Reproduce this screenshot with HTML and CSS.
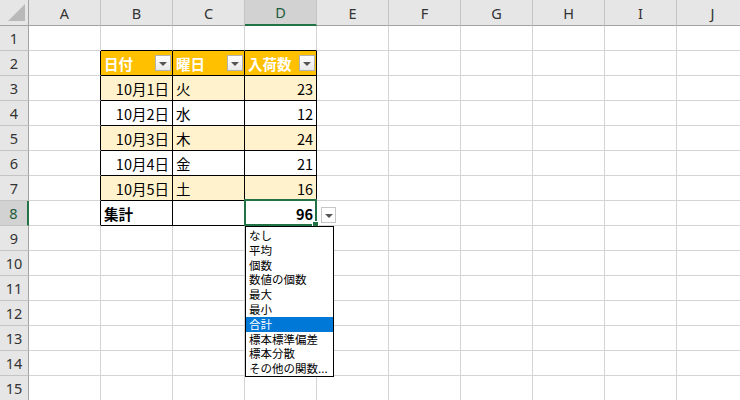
FILE: index.html
```html
<!DOCTYPE html>
<html lang="ja">
<head>
<meta charset="utf-8">
<link rel="stylesheet" href="styles.css">
</head>
<body>
<div class="sheet">
  <div class="h corner"><svg width="17" height="17" viewBox="0 0 17 17"><polygon points="17,0 17,17 0,17" fill="#b9b9b9"/></svg></div>
  <div class="h col">A</div><div class="h col">B</div><div class="h col">C</div><div class="h col selh">D</div><div class="h col">E</div><div class="h col">F</div><div class="h col">G</div><div class="h col">H</div><div class="h col">I</div><div class="h col">J</div>

  <div class="rn">1</div>
  <div class="c"></div><div class="c tt"></div><div class="c tt"></div><div class="c tt"></div><div class="c"></div><div class="c"></div><div class="c"></div><div class="c"></div><div class="c"></div><div class="c"></div>

  <div class="rn">2</div>
  <div class="c tl"></div>
  <div class="c t hd"><span>日付</span><span class="fb"><i></i></span></div>
  <div class="c t hd"><span>曜日</span><span class="fb"><i></i></span></div>
  <div class="c t hd"><span>入荷数</span><span class="fb"><i></i></span></div>
  <div class="c"></div><div class="c"></div><div class="c"></div><div class="c"></div><div class="c"></div><div class="c"></div>

  <div class="rn">3</div>
  <div class="c tl"></div>
  <div class="c t y r">10月1日</div><div class="c t y">火</div><div class="c t y r">23</div>
  <div class="c"></div><div class="c"></div><div class="c"></div><div class="c"></div><div class="c"></div><div class="c"></div>

  <div class="rn">4</div>
  <div class="c tl"></div>
  <div class="c t r">10月2日</div><div class="c t">水</div><div class="c t r">12</div>
  <div class="c"></div><div class="c"></div><div class="c"></div><div class="c"></div><div class="c"></div><div class="c"></div>

  <div class="rn">5</div>
  <div class="c tl"></div>
  <div class="c t y r">10月3日</div><div class="c t y">木</div><div class="c t y r">24</div>
  <div class="c"></div><div class="c"></div><div class="c"></div><div class="c"></div><div class="c"></div><div class="c"></div>

  <div class="rn">6</div>
  <div class="c tl"></div>
  <div class="c t r">10月4日</div><div class="c t">金</div><div class="c t r">21</div>
  <div class="c"></div><div class="c"></div><div class="c"></div><div class="c"></div><div class="c"></div><div class="c"></div>

  <div class="rn">7</div>
  <div class="c tl"></div>
  <div class="c t y r">10月5日</div><div class="c t y">土</div><div class="c t y r">16</div>
  <div class="c"></div><div class="c"></div><div class="c"></div><div class="c"></div><div class="c"></div><div class="c"></div>

  <div class="rn selr">8</div>
  <div class="c tl"></div>
  <div class="c t b">集計</div><div class="c t"></div>
  <div class="c t b r active">96
    <span class="frame"></span><span class="handle"></span>
    <span class="ddbtn"><i></i></span>
    <ul class="menu">
      <li>なし</li><li>平均</li><li>個数</li><li>数値の個数</li><li>最大</li><li>最小</li><li class="hi">合計</li><li>標本標準偏差</li><li>標本分散</li><li>その他の関数...</li>
    </ul>
  </div>
  <div class="c"></div><div class="c"></div><div class="c"></div><div class="c"></div><div class="c"></div><div class="c"></div>

  <div class="rn">9</div>
  <div class="c"></div><div class="c"></div><div class="c"></div><div class="c"></div><div class="c"></div><div class="c"></div><div class="c"></div><div class="c"></div><div class="c"></div><div class="c"></div>
  <div class="rn">10</div>
  <div class="c"></div><div class="c"></div><div class="c"></div><div class="c"></div><div class="c"></div><div class="c"></div><div class="c"></div><div class="c"></div><div class="c"></div><div class="c"></div>
  <div class="rn">11</div>
  <div class="c"></div><div class="c"></div><div class="c"></div><div class="c"></div><div class="c"></div><div class="c"></div><div class="c"></div><div class="c"></div><div class="c"></div><div class="c"></div>
  <div class="rn">12</div>
  <div class="c"></div><div class="c"></div><div class="c"></div><div class="c"></div><div class="c"></div><div class="c"></div><div class="c"></div><div class="c"></div><div class="c"></div><div class="c"></div>
  <div class="rn">13</div>
  <div class="c"></div><div class="c"></div><div class="c"></div><div class="c"></div><div class="c"></div><div class="c"></div><div class="c"></div><div class="c"></div><div class="c"></div><div class="c"></div>
  <div class="rn">14</div>
  <div class="c"></div><div class="c"></div><div class="c"></div><div class="c"></div><div class="c"></div><div class="c"></div><div class="c"></div><div class="c"></div><div class="c"></div><div class="c"></div>
  <div class="rn">15</div>
  <div class="c"></div><div class="c"></div><div class="c"></div><div class="c"></div><div class="c"></div><div class="c"></div><div class="c"></div><div class="c"></div><div class="c"></div><div class="c"></div>
</div>
</body>
</html>
```
FILE: styles.css
```css
html, body {
  margin: 0;
  padding: 0;
  background: #fff;
}
body {
  width: 740px;
  height: 400px;
  overflow: hidden;
  font-family: "Noto Sans CJK JP", "Noto Sans", sans-serif;
  color: #000;
}
.sheet {
  display: grid;
  grid-template-columns: 29px repeat(10, 72px);
  grid-template-rows: 26px;
  grid-auto-rows: 25px;
  width: 749px;
}
.sheet > div {
  box-sizing: border-box;
}
.h {
  background: #e6e6e6;
  border-right: 1px solid #c4c4c4;
  border-bottom: 1px solid #a3a3a3;
  display: flex;
  align-items: center;
  justify-content: center;
  font-size: 14.5px;
  color: #333;
  font-family: "Noto Sans", sans-serif;
}
.corner {
  justify-content: flex-end;
  align-items: flex-end;
  padding: 0 3px 4px 0;
  border-right: 1px solid #a3a3a3;
}
.corner svg { display: block; }
.selh {
  background: #d2d2d2;
  border-bottom: 2px solid #217346;
  color: #1d5b3c;
}
.rn {
  background: #e6e6e6;
  border-right: 1px solid #a3a3a3;
  border-bottom: 1px solid #c4c4c4;
  display: flex;
  align-items: center;
  justify-content: center;
  font-size: 14.5px;
  color: #333;
  font-family: "Noto Sans", sans-serif;
}
.selr {
  background: #d2d2d2;
  border-right: 2px solid #217346;
  color: #1d5b3c;
}
.c {
  border-right: 1px solid #d4d4d4;
  border-bottom: 1px solid #d4d4d4;
  display: flex;
  align-items: center;
  padding: 0 3px;
  font-size: 14.5px;
  white-space: nowrap;
}
.tt { border-bottom-color: #000; }
.tl { border-right-color: #000; }
.t {
  border-right-color: #000;
  border-bottom-color: #000;
}
.y { background: #fff2cc; }
.r { justify-content: flex-end; }
.b { font-weight: bold; }
.hd {
  background: #ffc000;
  color: #fff;
  font-weight: bold;
  justify-content: space-between;
  padding-right: 1px;
}
.fb, .ddbtn {
  width: 16px;
  height: 16px;
  box-sizing: border-box;
  border: 1px solid #b3b3b3;
  background: linear-gradient(#ffffff, #e9e9e9);
  display: flex;
  align-items: center;
  justify-content: center;
}
.fb i, .ddbtn i {
  display: block;
  width: 0;
  height: 0;
  border-left: 4px solid transparent;
  border-right: 4px solid transparent;
  border-top: 4px solid #555;
  margin-top: 1px;
}
.active {
  position: relative;
}
.frame {
  position: absolute;
  top: -2px;
  left: -1px;
  right: -1px;
  bottom: -1px;
  border: 2px solid #217346;
}
.handle {
  position: absolute;
  right: -3px;
  bottom: -3px;
  width: 5px;
  height: 5px;
  background: #217346;
  border: 1px solid #fff;
}
.ddbtn {
  position: absolute;
  left: 76px;
  top: 6px;
  width: 15px;
  height: 16px;
  background: #fff;
  border-color: #c6c6c6;
}
.menu {
  position: absolute;
  left: 0;
  top: 25px;
  width: 89px;
  height: 151px;
  box-sizing: border-box;
  margin: 0;
  padding: 1px 0 0 0;
  list-style: none;
  background: #fff;
  border: 1px solid #000;
  font-weight: normal;
  font-size: 11.5px;
  z-index: 2;
}
.menu li {
  height: 14.8px;
  line-height: 14.8px;
  padding-left: 3px;
  color: #000;
}
.menu li.hi {
  background: #0078d7;
  color: #fff;
}
```
